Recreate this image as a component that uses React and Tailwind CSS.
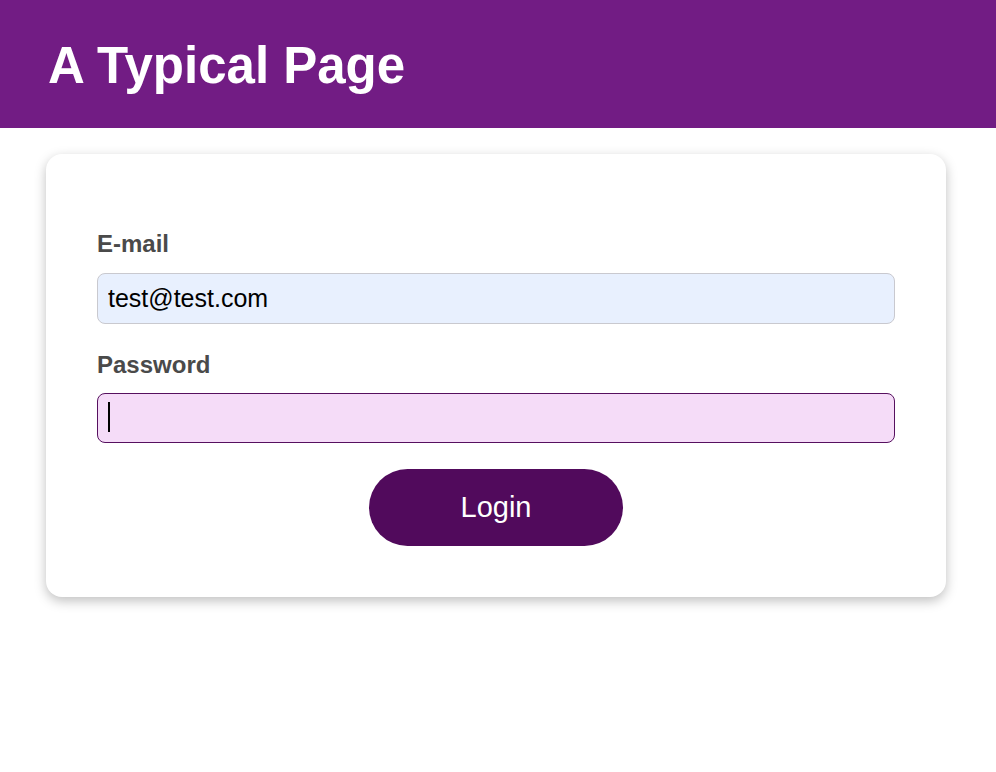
import { useState } from 'react';

const font = { fontFamily: '"Liberation Sans", Arial, Helvetica, sans-serif' };

const Champ = ({ label, children }) => (
  <div className="flex flex-col">
    <label className="text-[24px] font-bold text-[#4a4a4a] leading-[28px]">{label}</label>
    {children}
  </div>
);

export default function App() {
  const [email, setEmail] = useState('test@test.com');
  const [motDePasse, setMotDePasse] = useState('');

  return (
    <div className="min-h-screen bg-white" style={font}>
      {/* En-tête */}
      <header className="h-[128px] bg-[#721c84] flex items-center px-[48px]">
        <h1 className="text-[51px] font-bold text-white leading-none pt-[2px]">A Typical Page</h1>
      </header>

      {/* Carte de connexion */}
      <div className="mx-[46px] mt-[26px] w-[900px] rounded-2xl bg-white shadow-[0_4px_12px_rgba(0,0,0,0.25)] px-[51px] pt-[76px] pb-[51px]">
        <form className="flex flex-col" onSubmit={(e) => e.preventDefault()}>
          <Champ label="E-mail">
            <input
              type="email"
              value={email}
              onChange={(e) => setEmail(e.target.value)}
              className="mt-[15px] h-[51px] w-full rounded-lg border border-[#c9c9cf] bg-[#e8f0fe] px-[10px] text-[25px] text-black outline-none"
            />
          </Champ>

          <div className="mt-[27px]">
            <Champ label="Password">
              <div className="relative mt-[14px]">
                <input
                  type="password"
                  value={motDePasse}
                  onChange={(e) => setMotDePasse(e.target.value)}
                  className="h-[50px] w-full rounded-lg border border-[#56105f] bg-[#f5dcf8] px-[10px] text-[25px] text-black outline-none"
                />
                <span className="absolute left-[11px] top-[9px] h-[30px] w-[2px] bg-black" />
              </div>
            </Champ>
          </div>

          <div className="mt-[26px] flex justify-center">
            <button
              type="submit"
              className="h-[77px] w-[254px] rounded-full bg-[#510a5c] text-[29px] text-white"
            >
              Login
            </button>
          </div>
        </form>
      </div>
    </div>
  );
}
